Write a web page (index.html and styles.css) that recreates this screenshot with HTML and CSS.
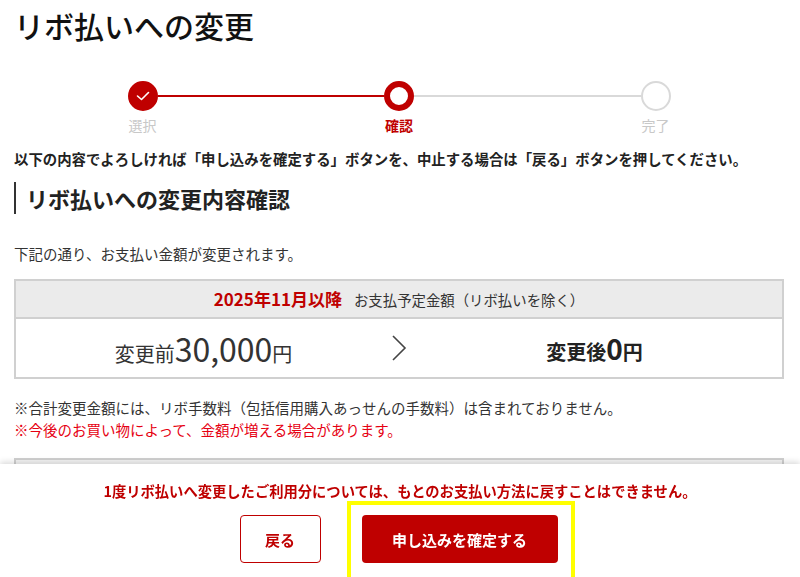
FILE: index.html
```html
<!DOCTYPE html>
<html lang="ja">
<head>
    <meta charset="UTF-8">
    <meta name="viewport" content="width=device-width, initial-scale=1.0">
    <title>リボ払いへの変更</title>
    <link rel="stylesheet" href="styles.css">
</head>
<body>
    <div class="page">
        <h1 class="page-title">リボ払いへの変更</h1>

        <div class="stepper">
            <div class="step done">
                <div class="dot">
                    <svg width="14" height="10" viewBox="0 0 14 10"><polyline points="1.5,5 5.5,8.5 12.5,1.5" fill="none" stroke="#fff" stroke-width="1.6" stroke-linecap="round" stroke-linejoin="round"/></svg>
                </div>
                <span class="step-label">選択</span>
            </div>
            <div class="bar active"></div>
            <div class="step current">
                <div class="dot"></div>
                <span class="step-label">確認</span>
            </div>
            <div class="bar"></div>
            <div class="step">
                <div class="dot"></div>
                <span class="step-label">完了</span>
            </div>
        </div>

        <p class="lead">以下の内容でよろしければ「申し込みを確定する」ボタンを、中止する場合は「戻る」ボタンを押してください。</p>

        <h2 class="section-title">リボ払いへの変更内容確認</h2>

        <p class="text">下記の通り、お支払い金額が変更されます。</p>

        <div class="amount-box">
            <div class="amount-head">
                <span class="month">2025年11月以降</span>
                <span class="head-note">お支払予定金額（リボ払いを除く）</span>
            </div>
            <div class="amount-body">
                <div class="before">変更前<span class="num">30,000</span>円</div>
                <svg class="arrow" width="16" height="28" viewBox="0 0 16 28"><polyline points="2,2 14,14 2,26" fill="none" stroke="#444" stroke-width="1.6"/></svg>
                <div class="after">変更後<span class="num">0</span>円</div>
            </div>
        </div>

        <div class="notes">
            <p class="note">※合計変更金額には、リボ手数料（包括信用購入あっせんの手数料）は含まれておりません。</p>
            <p class="note red">※今後のお買い物によって、金額が増える場合があります。</p>
        </div>

        <div class="next-box"></div>
    </div>

    <div class="action-bar">
        <p class="warning">1度リボ払いへ変更したご利用分については、もとのお支払い方法に戻すことはできません。</p>
        <div class="buttons">
            <button class="btn btn-back">戻る</button>
            <span class="highlight">
                <button class="btn btn-submit">申し込みを確定する</button>
            </span>
        </div>
    </div>
</body>
</html>
```

FILE: styles.css
```css
body {
    margin: 0;
    font-family: "Noto Sans CJK JP", "Noto Sans", sans-serif;
    color: #333;
    background: #fff;
    overflow: hidden;
}

p {
    margin: 0;
}

.page {
    padding: 0 16px 0 14px;
}

.page-title {
    margin: 0;
    padding-top: 4px;
    font-size: 30px;
    font-weight: 500;
    line-height: 43px;
    color: #111;
}

/* ステッパー */
.stepper {
    display: flex;
    align-items: flex-start;
    width: 543px;
    margin: 34px auto 0;
}
.step {
    display: flex;
    flex-direction: column;
    align-items: center;
    width: 30px;
}
.step .dot {
    box-sizing: border-box;
    width: 30px;
    height: 30px;
    border-radius: 50%;
    border: 2px solid #d9d9d9;
    background: #fff;
    display: flex;
    justify-content: center;
    align-items: center;
}
.step.done .dot {
    background: #bf0000;
    border-color: #bf0000;
}
.step.current .dot {
    border: 6px solid #bf0000;
}
.step-label {
    margin-top: 5px;
    font-size: 14px;
    line-height: 18px;
    color: #c8c8c8;
    white-space: nowrap;
}
.step.current .step-label {
    color: #bf0000;
    font-weight: 700;
}
.bar {
    flex: 1;
    height: 2px;
    margin-top: 14px;
    background: #d9d9d9;
}
.bar.active {
    background: #bf0000;
}

.lead {
    margin-top: 15px;
    font-size: 14.4px;
    font-weight: 700;
    line-height: 20px;
    color: #222;
}

.section-title {
    margin: 13px 0 0;
    padding-left: 10px;
    border-left: 2px solid #333;
    font-size: 22px;
    font-weight: 700;
    line-height: 32px;
    color: #222;
}

.text {
    margin-top: 30px;
    font-size: 14.5px;
    line-height: 20px;
}

/* 金額ボックス */
.amount-box {
    margin-top: 15px;
    border: 2px solid #d0d0d0;
}
.amount-head {
    display: flex;
    justify-content: center;
    align-items: baseline;
    gap: 12px;
    height: 36px;
    line-height: 36px;
    background: #ebebeb;
    border-bottom: 2px solid #d0d0d0;
}
.month {
    color: #bf0000;
    font-size: 17px;
    font-weight: 700;
}
.head-note {
    font-size: 14.4px;
}
.amount-body {
    display: grid;
    grid-template-columns: 1fr auto 1fr;
    align-items: center;
    height: 58px;
}
.before,
.after {
    text-align: center;
    font-size: 20px;
}
.before .num {
    font-size: 32px;
}
.after {
    font-weight: 700;
    color: #222;
}
.after .num {
    font-size: 28px;
}
.arrow {
    display: block;
}

.notes {
    margin-top: 18px;
}
.note {
    font-size: 14.5px;
    line-height: 22px;
}
.note.red {
    color: #e60012;
}

.next-box {
    margin-top: 17px;
    height: 60px;
    border: 2px solid #d0d0d0;
    background: #f4f4f4;
}

/* 下部固定バー */
.action-bar {
    position: fixed;
    left: 0;
    right: 0;
    bottom: 0;
    padding: 17px 0 14px;
    background: #fff;
    box-shadow: 0 -2px 6px rgba(0, 0, 0, 0.15);
    text-align: center;
}
.warning {
    font-size: 14.3px;
    font-weight: 700;
    line-height: 20px;
    color: #bf0000;
}
.buttons {
    display: flex;
    justify-content: center;
    gap: 41px;
    margin-top: 14px;
    padding-right: 3px;
}
.btn {
    font-family: inherit;
    font-size: 15px;
    font-weight: 700;
    height: 48px;
    border-radius: 4px;
    cursor: pointer;
}
.btn-back {
    width: 81px;
    background: #fff;
    color: #bf0000;
    border: 1px solid #bf0000;
}
.btn-submit {
    display: block;
    width: 196px;
    background: #bf0000;
    color: #fff;
    border: none;
}
/* 黄色の強調枠 */
.highlight {
    position: relative;
}
.highlight::after {
    content: "";
    position: absolute;
    top: -14px;
    left: -15px;
    right: -17px;
    bottom: -24px;
    border: 4px solid #ffff00;
    pointer-events: none;
}
```
